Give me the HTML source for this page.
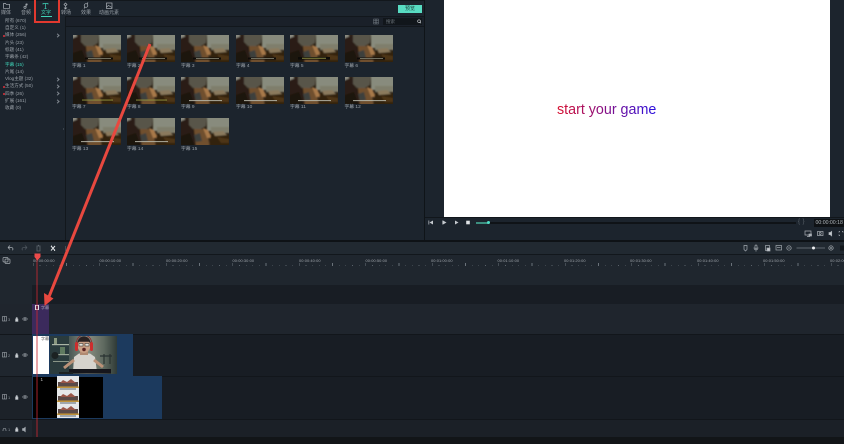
<!DOCTYPE html>
<html lang="zh">
<head>
<meta charset="utf-8">
<style>
html,body{margin:0;padding:0;width:844px;height:444px;overflow:hidden;background:#1b232c}
body{position:relative;font-family:"Liberation Sans","Noto Sans CJK SC",sans-serif;color:#aab0b6}
.a{position:absolute}
.tab{position:absolute;top:9.8px;font-size:5px;line-height:6px;color:#9aa1a8;text-align:center;white-space:nowrap}
.cat{position:absolute;left:5px;font-size:4.6px;line-height:6px;color:#9aa1a8;white-space:nowrap}
.dot{position:absolute;left:2.5px;width:2px;height:2px;border-radius:50%;background:#e0323c}
.chev{position:absolute;left:55.5px;width:2px;height:2px;border-top:.7px solid #7d858d;border-right:.7px solid #7d858d;transform:rotate(45deg)}
.th{position:absolute;width:48px;height:27px}
.lb{position:absolute;font-size:4.8px;line-height:6px;color:#9aa1a8;white-space:nowrap}
.tc{position:absolute;top:258px;font-size:3.9px;line-height:5px;color:#a0a6ac;letter-spacing:.1px;white-space:nowrap}
</style>
</head>
<body>
<svg width="0" height="0" style="position:absolute">
<defs>
<filter id="b" x="-10%" y="-10%" width="120%" height="120%"><feGaussianBlur stdDeviation=".8"/></filter>
<filter id="b2"><feGaussianBlur stdDeviation=".35"/></filter>
<symbol id="t" viewBox="0 0 48 27">
<rect width="48" height="27" fill="#2c2216"/>
<g filter="url(#b)">
<rect x="26" y="-2" width="24" height="15" fill="#888b7d"/>
<rect x="30" y="9" width="20" height="6" fill="#7f7e6c"/>
<path d="M-2-2H4V3L-2 5Z" fill="#8a8a80"/>
<path d="M-2 4 8 0 10 10 15 14 22 29H-2Z" fill="#2a1f14"/>
<path d="M8-2H26L25 8 20 11H12L8 7Z" fill="#595549"/>
<path d="M13 11H23L27 18 29 29H15Z" fill="#6f4f2e"/>
<path d="M22 10 27 12 31 20 26 20Z" fill="#a8794a"/>
<path d="M13 17 19 15 21 23 15 24Z" fill="#3e3f3c"/>
<path d="M30 16 40 15 50 18V29H28Z" fill="#33230f"/>
<path d="M32 14 42 13 46 17 34 18Z" fill="#8b7a5d"/>
<path d="M36 19 48 21V25H40Z" fill="#4d3414"/>
<path d="M0 18 9 15 14 29H-2Z" fill="#1d150c"/>
</g>
</symbol>
<symbol id="t1" viewBox="0 0 48 27"><use href="#t" width="48" height="27"/><rect x="12" y="22.500" width="28" height="2" fill="#0e0c09"/><rect x="15" y="23" width="23" height=".7" fill="#9c9a86"/></symbol>
<symbol id="t2" viewBox="0 0 48 27"><use href="#t" width="48" height="27"/><rect x="8" y="22" width="32" height="2.600" fill="#0c0b08"/><rect x="12" y="22.800" width="24" height=".8" fill="#a8a84e"/></symbol>
<symbol id="t3" viewBox="0 0 48 27"><use href="#t" width="48" height="27"/><rect x="8" y="23.200" width="33" height=".9" fill="#bcbcae"/></symbol>
<symbol id="t4" viewBox="0 0 48 27"><use href="#t" width="48" height="27"/><rect x="9" y="22.600" width="31" height=".9" fill="#94973f"/></symbol>
<symbol id="poster" viewBox="0 0 22 14"><rect width="22" height="14" fill="#e6e8ea"/><rect x="1" y="5" width="20" height="6" fill="#5a4a48"/><path d="M3 6 6 3 10 5 14 2 19 6Z" fill="#9a5648"/><rect x="0" y="9.500" width="22" height="1.400" fill="#c99a38"/><rect x="3" y="11.500" width="16" height="1" fill="#5b6670"/></symbol>
</defs>
</svg>

<!-- top panels -->
<div class="a" style="left:0;top:0;width:844px;height:240px;background:#1c242d"></div>
<div class="a" style="left:0;top:0;width:424px;height:.8px;background:#12171c"></div>
<div class="a" style="left:65px;top:16px;width:359px;height:1px;background:#12171c"></div>
<div class="a" style="left:65px;top:17px;width:359px;height:9px;background:#1a2029"></div>
<div class="a" style="left:65px;top:26px;width:359px;height:1px;background:#12171c"></div>
<div class="a" style="left:65px;top:17px;width:1px;height:223px;background:#12171c"></div>
<div class="a" style="left:424px;top:0;width:1px;height:240px;background:#0f1418"></div>

<!-- tab icons -->
<svg class="a" style="left:0;top:0" width="130" height="11" viewBox="0 0 130 11" fill="none" stroke="#aeb4ba" stroke-width=".7">
<path d="M3.500 3.500h2l.7.8h3.300v4h-6z"/>
<circle cx="25" cy="7.300" r="1.100"/><path d="M26 7.300V4.500l1.500-.6"/><circle cx="26.500" cy="4.500" r=".7"/>
<path d="M43 4.500V3.500h5v1M45.500 3.500V8.500M44.500 8.500h2" stroke="#3fd3b8"/>
<path d="M65.500 3l1.500 1.500L65.500 6 64 4.500zM65.500 6v2.500M64 7.500 65.500 9 67 7.500"/>
<circle cx="86" cy="5.500" r="1.800"/><path d="M85 7 84 8.500M87 4 88 2.500"/>
<rect x="106.500" y="3" width="5.500" height="5.500"/><path d="M106.500 7 108.500 5.500 112 7.500"/>
</svg>
<div class="tab" style="left:0;width:12px">媒体</div>
<div class="tab" style="left:20px;width:12px">音频</div>
<div class="tab" style="left:40px;width:12px;color:#3fd3b8">文字</div>
<div class="tab" style="left:60px;width:12px">转场</div>
<div class="tab" style="left:80px;width:12px">效果</div>
<div class="tab" style="left:99px;width:20px">动画元素</div>
<div class="a" style="left:40.500px;top:16px;width:11px;height:.9px;background:#3fd3b8"></div>

<!-- categories -->
<div class="cat" style="top:17.500px">所有 (670)</div>
<div class="cat" style="top:25px">自定义 (1)</div>
<div class="dot" style="top:34.500px"></div><div class="cat" style="top:32px">媒体 (256)</div><div class="chev" style="top:34px"></div>
<div class="cat" style="top:39.500px">片头 (23)</div>
<div class="cat" style="top:47px">标题 (41)</div>
<div class="cat" style="top:54px">字幕条 (42)</div>
<div class="cat" style="top:61.500px;color:#3fd3b8">字幕 (15)</div>
<div class="cat" style="top:69px">片尾 (14)</div>
<div class="cat" style="top:76px">Vlog主题 (32)</div><div class="chev" style="top:78px"></div>
<div class="dot" style="top:85.500px"></div><div class="cat" style="top:83px">生活方式 (50)</div><div class="chev" style="top:85px"></div>
<div class="dot" style="top:92.500px"></div><div class="cat" style="top:90.500px">四季 (26)</div><div class="chev" style="top:92px"></div>
<div class="cat" style="top:98px">扩展 (161)</div><div class="chev" style="top:100px"></div>
<div class="cat" style="top:105px">收藏 (0)</div>
<div class="a" style="left:62.500px;top:127.500px;width:0;height:0;border:1.200px solid transparent;border-right:1.600px solid #5d656d;border-left:0"></div>

<!-- preview button and search -->
<div class="a" style="left:398px;top:5px;width:24px;height:8px;background:#58dcc2;color:#1d3a38;font-size:5px;line-height:8px;text-align:center">预览</div>
<svg class="a" style="left:373px;top:18px" width="6" height="7" viewBox="0 0 6 7" fill="none" stroke="#6f777f" stroke-width=".5"><path d="M.5 1h5v5h-5zM2.200 1v5M3.800 1v5M.5 2.700h5M.5 4.300h5"/></svg>
<div class="a" style="left:383px;top:18px;width:39px;height:7px;background:#11161b;font-size:4.500px;line-height:7px;color:#6b737a;text-indent:3px">搜索</div>
<svg class="a" style="left:416px;top:19px" width="6" height="5" viewBox="0 0 6 5" fill="none" stroke="#c3c8cc" stroke-width=".7"><circle cx="3" cy="2.200" r="1.400"/><path d="M4 3.200l1 1"/></svg>

<!-- thumbnails -->
<svg class="th" style="left:72.500px;top:35px"><use href="#t1"/></svg>
<svg class="th" style="left:127px;top:35px"><use href="#t1"/></svg>
<svg class="th" style="left:181px;top:35px"><use href="#t1"/></svg>
<svg class="th" style="left:236px;top:35px"><use href="#t1"/></svg>
<svg class="th" style="left:290px;top:35px"><use href="#t2"/></svg>
<svg class="th" style="left:344.500px;top:35px"><use href="#t1"/></svg>
<svg class="th" style="left:72.500px;top:76.500px"><use href="#t4"/></svg>
<svg class="th" style="left:127px;top:76.500px"><use href="#t4"/></svg>
<svg class="th" style="left:181px;top:76.500px"><use href="#t3"/></svg>
<svg class="th" style="left:236px;top:76.500px"><use href="#t3"/></svg>
<svg class="th" style="left:290px;top:76.500px"><use href="#t3"/></svg>
<svg class="th" style="left:344.500px;top:76.500px"><use href="#t3"/></svg>
<svg class="th" style="left:72.500px;top:118px"><use href="#t3"/></svg>
<svg class="th" style="left:127px;top:118px"><use href="#t3"/></svg>
<svg class="th" style="left:181px;top:118px"><use href="#t"/></svg>

<div class="lb" style="left:72px;top:63.500px">字幕 1</div>
<div class="lb" style="left:127px;top:63.500px">字幕 2</div>
<div class="lb" style="left:181px;top:63.500px">字幕 3</div>
<div class="lb" style="left:236px;top:63.500px">字幕 4</div>
<div class="lb" style="left:290px;top:63.500px">字幕 5</div>
<div class="lb" style="left:344.500px;top:63.500px">字幕 6</div>
<div class="lb" style="left:72px;top:105px">字幕 7</div>
<div class="lb" style="left:127px;top:105px">字幕 8</div>
<div class="lb" style="left:181px;top:105px">字幕 9</div>
<div class="lb" style="left:236px;top:105px">字幕 10</div>
<div class="lb" style="left:290px;top:105px">字幕 11</div>
<div class="lb" style="left:344.500px;top:105px">字幕 12</div>
<div class="lb" style="left:72px;top:146.500px">字幕 13</div>
<div class="lb" style="left:127px;top:146.500px">字幕 14</div>
<div class="lb" style="left:181px;top:146.500px">字幕 15</div>

<!-- preview -->
<div class="a" style="left:444px;top:0;width:386px;height:217px;background:#fff"></div>
<div class="a" style="left:557px;top:101px;font-size:14.300px;line-height:18px;white-space:nowrap;background:linear-gradient(90deg,#d80f2e,#8c1080 45%,#2a10e0);-webkit-background-clip:text;background-clip:text;color:transparent">start your game</div>

<!-- player controls -->
<div class="a" style="left:425px;top:217px;width:419px;height:1px;background:#11161b"></div>
<svg class="a" style="left:425px;top:218px" width="60" height="10" viewBox="0 0 60 10" fill="#c5cacf">
<path d="M4.500 4.500 8 2.500v4z"/><rect x="3.500" y="2.500" width=".7" height="4"/>
<path d="M18 2.500 21.500 4.500 18 6.500z"/><rect x="17" y="2.500" width=".6" height="4"/>
<path d="M30 2.500 33.500 4.500 30 6.500z"/>
<rect x="41.200" y="2.700" width="3.600" height="3.600" fill="#dfe3e6"/>
</svg>
<div class="a" style="left:476px;top:222px;width:320px;height:1.600px;background:#0f1317"></div>
<div class="a" style="left:476px;top:222px;width:13px;height:1.600px;background:#3c8f80"></div>
<div class="a" style="left:487px;top:221px;width:3.400px;height:3.400px;border-radius:50%;background:#4fe0c8"></div>
<div class="a" style="left:798px;top:219px;font-size:6px;line-height:7px;color:#5c646c;letter-spacing:2.500px">{}</div>
<div class="a" style="left:814px;top:218.500px;width:30px;height:8px;background:#0e1114;font-size:5.200px;line-height:8px;color:#b0b6bb;white-space:nowrap;overflow:hidden;text-indent:1.500px">00:00:00:18</div>
<svg class="a" style="left:802px;top:229px" width="42" height="10" viewBox="0 0 42 10" fill="none" stroke="#aab0b6" stroke-width=".7">
<path d="M3 2h6v4H3zM5 7.500h3"/><rect x="7" y="5" width="2.500" height="2" fill="#aab0b6"/>
<rect x="15.500" y="2.500" width="5.500" height="4"/><circle cx="18.200" cy="4.500" r="1"/>
<path d="M27 3.500h1.200l1.500-1.200v4.600l-1.500-1.200H27z" fill="#c8cdd1"/>
<path d="M37 2.500h1M37 2.500v1M41 2.500h-1M41 2.500v1M37 6.500h1M37 6.500v-1"/>
</svg>

<!-- timeline toolbar -->
<div class="a" style="left:0;top:239.500px;width:844px;height:2px;background:#0e1216"></div>
<div class="a" style="left:0;top:241.500px;width:844px;height:12.500px;background:#212931"></div>
<div class="a" style="left:0;top:254px;width:844px;height:1px;background:#12171c"></div>
<svg class="a" style="left:0;top:242px" width="70" height="12" viewBox="0 0 70 12" fill="none" stroke-width=".8">
<path d="M8 6.500 10 4.500M8 6.500h3.500c1.500 0 1.800 1.800 1 2.800M8 6.500l2 2" stroke="#a4aab0" transform="translate(0,-1)"/>
<path d="M27 5.500 25 3.500M27 5.500h-3.500c-1.500 0-1.800 1.800-1 2.800M27 5.500l-2 2" stroke="#4e565e"/>
<path d="M36.500 4h4M37 4.500v4.500h3v-4.500M38 3.300h1" stroke="#5e666e"/>
<path d="M51 4 55 8.500M55 4 51 8.500" stroke="#e2e5e8" stroke-width="1"/>
<path d="M51 4h1M55 8.500h-1" stroke="#e2e5e8"/>
<path d="M65.500 4v5" stroke="#4e565e"/>
</svg>
<svg class="a" style="left:740px;top:242px" width="104" height="12" viewBox="0 0 104 12" fill="none" stroke="#a4aab0" stroke-width=".7">
<path d="M4 3.500h3v4L5.500 9 4 7.500z"/>
<rect x="15" y="3" width="2" height="3.500" rx="1"/><path d="M14 5.500c0 3 4 3 4 0M16 8v1.500"/>
<rect x="25.500" y="3.500" width="4" height="5"/><rect x="27" y="6" width="3" height="3" fill="#c5cacf"/>
<rect x="36" y="3.500" width="5.500" height="4.500"/><path d="M37 5.500h3.500"/>
<circle cx="49" cy="6" r="2.200"/><path d="M47.800 6h2.400"/>
<path d="M56.500 6H85" stroke="#5f676f" stroke-width="1"/>
<circle cx="73.500" cy="6" r="1.500" fill="#eef0f2" stroke="none"/>
<circle cx="91" cy="6" r="2.200"/><path d="M89.800 6h2.400M91 4.800v2.400"/>
<rect x="100" y="3.500" width="6" height="5" fill="#12171c" stroke="none"/>
</svg>

<!-- timeline rows -->
<div class="a" style="left:0;top:255px;width:844px;height:30px;background:#1f262e"></div>
<div class="a" style="left:32px;top:285px;width:812px;height:19px;background:#181d24"></div>
<div class="a" style="left:0;top:285px;width:32px;height:19px;background:#1f262e"></div>
<div class="a" style="left:0;top:304px;width:844px;height:30px;background:#1f252d"></div>
<div class="a" style="left:32px;top:334px;width:812px;height:42px;background:#181d24"></div>
<div class="a" style="left:0;top:334px;width:32px;height:42px;background:#1f262e"></div>
<div class="a" style="left:32px;top:376px;width:812px;height:43px;background:#181d24"></div>
<div class="a" style="left:0;top:376px;width:32px;height:43px;background:#1c2229"></div>
<div class="a" style="left:32px;top:419px;width:812px;height:18px;background:#1b2027"></div>
<div class="a" style="left:0;top:419px;width:32px;height:18px;background:#1f262e"></div>
<div class="a" style="left:0;top:437px;width:844px;height:7px;background:#121518"></div>
<div class="a" style="left:0;top:334px;width:844px;height:.6px;background:#12161b"></div>
<div class="a" style="left:0;top:376px;width:844px;height:.6px;background:#12161b"></div>
<div class="a" style="left:0;top:419px;width:844px;height:.6px;background:#12161b"></div>

<!-- ruler -->
<div class="a" style="left:33px;top:264.500px;width:811px;height:1px;background:repeating-linear-gradient(90deg,#59616a 0,#59616a .6px,transparent .6px,transparent 6.650px)"></div>
<div class="a" style="left:33px;top:263px;width:811px;height:3px;background:repeating-linear-gradient(90deg,#6a727a 0,#6a727a .7px,transparent .7px,transparent 33.250px)"></div>
<div class="tc" style="left:33px">00:00:00:00</div>
<div class="tc" style="left:99.500px">00:00:10:00</div>
<div class="tc" style="left:166px">00:00:20:00</div>
<div class="tc" style="left:232.500px">00:00:30:00</div>
<div class="tc" style="left:299px">00:00:40:00</div>
<div class="tc" style="left:365.500px">00:00:50:00</div>
<div class="tc" style="left:431px">00:01:00:00</div>
<div class="tc" style="left:497.500px">00:01:10:00</div>
<div class="tc" style="left:564px">00:01:20:00</div>
<div class="tc" style="left:630px">00:01:30:00</div>
<div class="tc" style="left:697px">00:01:40:00</div>
<div class="tc" style="left:763px">00:01:50:00</div>
<div class="tc" style="left:830px">00:02:00:00</div>
<svg class="a" style="left:1px;top:256px" width="11" height="9" viewBox="0 0 11 9" fill="none" stroke="#a4aab0" stroke-width=".7"><rect x="2" y="1.500" width="5" height="4.500" rx="1"/><rect x="4" y="3" width="5" height="4.500" rx="1"/></svg>

<!-- clips -->
<div class="a" style="left:32px;top:304px;width:17px;height:30px;background:#3b2a5c"></div>
<div class="a" style="left:34.500px;top:305px;width:4.500px;height:5px;background:#dcdde2"></div>
<div class="a" style="left:35.500px;top:306px;width:2.500px;height:3px;background:#3b2a5c"></div>
<div class="a" style="left:41px;top:305px;font-size:4px;line-height:5px;color:#a8a4b8;white-space:nowrap">字幕</div>

<div class="a" style="left:32px;top:334px;width:101px;height:42px;background:#1c3a5e"></div>
<div class="a" style="left:33px;top:336px;width:16px;height:38px;background:#fff"></div>
<div class="a" style="left:41px;top:336px;font-size:4px;line-height:5px;color:#555;white-space:nowrap">字幕</div>

<svg class="a" style="left:50px;top:335.500px" width="67" height="38" viewBox="0 0 67 38">
<defs><linearGradient id="bg" x1="0" x2="1"><stop offset="0" stop-color="#2c3a3a"/><stop offset=".3" stop-color="#4c5a56"/><stop offset=".55" stop-color="#8a8e82"/><stop offset=".8" stop-color="#5f6a60"/><stop offset="1" stop-color="#2f3a36"/></linearGradient></defs>
<rect width="67" height="38" fill="url(#bg)"/>
<g filter="url(#b2)">
<rect x="0" y="0" width="19" height="38" fill="#2a3a3c"/>
<rect x="2" y="8" width="17" height="1.200" fill="#aab5a5"/>
<rect x="2" y="18" width="17" height="1.200" fill="#9aa695"/>
<rect x="3" y="25" width="16" height="1" fill="#8a9688"/>
<rect x="4" y="2" width="3" height="6" fill="#8a9880"/>
<rect x="10" y="11" width="5" height="7" fill="#5f7a60"/>
<circle cx="5" cy="19.500" r="3.500" fill="#1c2224"/>
<path d="M50 20h12M54 18v10M60 18v10" stroke="#2a3230" stroke-width="1.200" fill="none"/>
<path d="M23 36 24 21 29 17.500H40L45 21 47 36Z" fill="#d6d3cd"/>
<rect x="30" y="14" width="8" height="5" fill="#b08a72"/>
<ellipse cx="34" cy="9.500" rx="6.300" ry="7.500" fill="#c99f85"/>
<path d="M27.500 7.500c0-9.500 13-9.500 13 0l-1.500-1.800H29z" fill="#2a2420"/>
<rect x="25" y="6" width="3" height="9" rx="1.500" fill="#cc2e2e"/>
<rect x="40" y="6" width="3" height="9" rx="1.500" fill="#cc2e2e"/>
<path d="M26.500 6c1-9 14-9 15 0" fill="none" stroke="#8a2a2a" stroke-width=".8"/>
<rect x="29" y="7.500" width="4" height="2.500" fill="#e8e4dc" stroke="#222" stroke-width=".5"/>
<rect x="35" y="7.500" width="4" height="2.500" fill="#e8e4dc" stroke="#222" stroke-width=".5"/>
<ellipse cx="34" cy="13.500" rx="1.800" ry="1.700" fill="#5a2420"/>
<path d="M24 24 14 32M44 24 53 31" stroke="#bb9278" stroke-width="3"/>
<rect x="19" y="33" width="42" height="4.500" fill="#14181a"/>
<rect x="9" y="36" width="14" height="2" fill="#1c2022"/>
</g>
</svg>

<div class="a" style="left:32px;top:376px;width:130px;height:43px;background:#1c3a5e"></div>
<div class="a" style="left:33px;top:377px;width:70px;height:41px;background:#000"></div>
<div class="a" style="left:40.500px;top:377px;font-size:4.500px;line-height:6px;color:#c0c0c0">1</div>
<div class="a" style="left:56.500px;top:376px;width:22px;height:42px;background:#e6e8ea"></div>
<svg class="a" style="left:56.500px;top:376.500px" width="22" height="14"><use href="#poster"/></svg>
<svg class="a" style="left:56.500px;top:390.500px" width="22" height="14"><use href="#poster"/></svg>
<svg class="a" style="left:56.500px;top:404px" width="22" height="14"><use href="#poster"/></svg>

<!-- track headers -->
<svg class="a" style="left:0;top:300px" width="32" height="140" viewBox="0 0 32 140" fill="none" stroke="#a4aab0" stroke-width=".6">
<g>
<rect x="2.500" y="16.500" width="4" height="4.500"/><path d="M4.500 16.500v4.500"/>
<path d="M15.500 19h2.500v2.500h-2.500zM16 19v-.8c0-1 1.500-1 1.500 0v.8" fill="#cfd3d6"/>
<path d="M22.500 19c1.500-2 3.500-2 5 0-1.500 2-3.500 2-5 0z"/><circle cx="25" cy="19" r=".6" fill="#a4aab0"/>
</g>
<g transform="translate(0,36)"><rect x="2.500" y="16.500" width="4" height="4.500"/><path d="M4.500 16.500v4.500"/><path d="M15.500 19h2.500v2.500h-2.500zM16 19v-.8c0-1 1.500-1 1.500 0v.8" fill="#cfd3d6"/><path d="M22.500 19c1.500-2 3.500-2 5 0-1.500 2-3.500 2-5 0z"/><circle cx="25" cy="19" r=".6" fill="#a4aab0"/></g>
<g transform="translate(0,78)"><rect x="2.500" y="16.500" width="4" height="4.500"/><path d="M4.500 16.500v4.500"/><path d="M15.500 19h2.500v2.500h-2.500zM16 19v-.8c0-1 1.500-1 1.500 0v.8" fill="#cfd3d6"/><path d="M22.500 19c1.500-2 3.500-2 5 0-1.500 2-3.500 2-5 0z"/><circle cx="25" cy="19" r=".6" fill="#a4aab0"/></g>
<g transform="translate(0,110)"><path d="M3 20.500c0-3 3-3 3 0M2.500 20.500h1M5.500 20.500h1"/><path d="M15.500 19h2.500v2.500h-2.500zM16 19v-.8c0-1 1.500-1 1.500 0v.8" fill="#cfd3d6"/><path d="M22.500 18.500h1.200l1.600-1.300v4.600l-1.600-1.300h-1.200z" fill="#a4aab0"/></g>
</svg>
<div class="a" style="left:8px;top:316.500px;font-size:4px;line-height:5px;color:#8d949b">3</div>
<div class="a" style="left:8px;top:352.500px;font-size:4px;line-height:5px;color:#8d949b">2</div>
<div class="a" style="left:8px;top:394.500px;font-size:4px;line-height:5px;color:#8d949b">1</div>
<div class="a" style="left:8px;top:426.500px;font-size:4px;line-height:5px;color:#8d949b">1</div>

<!-- playhead -->
<div class="a" style="left:36.200px;top:258px;width:1.400px;height:179px;background:rgba(200,40,50,.42)"></div>
<svg class="a" style="left:33.500px;top:253px" width="7" height="8" viewBox="0 0 7 8"><path d="M.5 .5h6V4L3.500 7.500.5 4z" fill="#ec4a4a"/></svg>

<!-- annotations -->
<div class="a" style="left:33.500px;top:-2px;width:22px;height:21px;border:2px solid #e2392f;box-sizing:content-box"></div>
<svg class="a" style="left:0;top:0" width="844" height="444" viewBox="0 0 844 444">
<path d="M150 44 48.500 298" stroke="#e8483f" stroke-width="3" fill="none"/>
<path d="M44.500 306 44 293 49 296 53.500 298.500Z" fill="#e8483f"/>
</svg>
</body>
</html>
